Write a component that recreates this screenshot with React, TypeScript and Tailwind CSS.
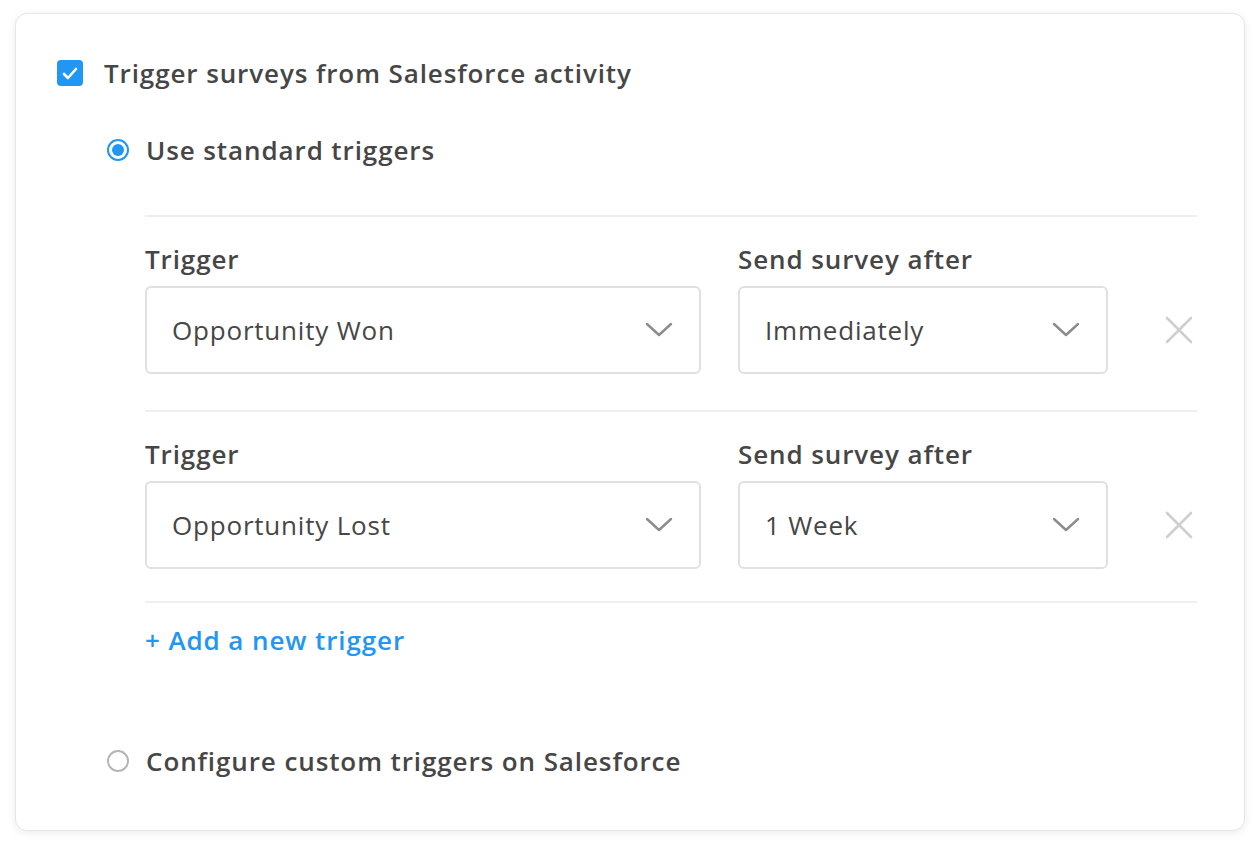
import React, { useState } from 'react';

interface TriggerRow {
  trigger: string;
  delay: string;
}

const Chevron = () => (
  <svg width="28" height="16" viewBox="0 0 28 16" fill="none">
    <path d="M2 2 L14 13 L26 2" stroke="#8c8c8c" strokeWidth="2.4" strokeLinecap="round" strokeLinejoin="round" />
  </svg>
);

const CloseIcon = () => (
  <svg width="28" height="28" viewBox="0 0 28 28" fill="none">
    <path d="M2 2 L26 26 M26 2 L2 26" stroke="#cfcfcf" strokeWidth="2.6" strokeLinecap="round" />
  </svg>
);

const SelectBox = ({ value, width }: { value: string; width: string }) => (
  <div className={`${width} h-[88px] flex items-center justify-between pl-[25px] pr-[26px] border-2 border-[#e0e0e0] rounded-[6px] bg-white`}>
    <span className="text-[26px] text-[#464646] tracking-[0.8px]">{value}</span>
    <Chevron />
  </div>
);

const App = () => {
  const [rows] = useState<TriggerRow[]>([
    { trigger: 'Opportunity Won', delay: 'Immediately' },
    { trigger: 'Opportunity Lost', delay: '1 Week' },
  ]);

  return (
    <div className="min-h-screen bg-white pt-[13px] pl-[15px]" style={{ fontFamily: '"Open Sans", Lato, sans-serif' }}>
      <div className="w-[1230px] border border-[#e6e6e6] rounded-[12px] bg-white shadow-[0_2px_8px_rgba(0,0,0,0.08)] pt-[39px] pb-[49px] pl-[41px] pr-[47px]">
        {/* master checkbox */}
        <div className="h-[40px] flex items-center">
          <div className="w-[26px] h-[26px] rounded-[4px] bg-[#2196f3] flex items-center justify-center">
            <svg width="16" height="13" viewBox="0 0 16 13" fill="none">
              <path d="M2 7 L6 11 L14 2" stroke="white" strokeWidth="2.6" strokeLinecap="round" strokeLinejoin="round" />
            </svg>
          </div>
          <span className="ml-[21px] text-[26px] font-semibold text-[#464646] tracking-[0.9px]">Trigger surveys from Salesforce activity</span>
        </div>

        <div className="pl-[50px]">
          <div className="mt-[37px] h-[40px] flex items-center">
            <div className="w-[22px] h-[22px] rounded-full border-2 border-[#2196f3] flex items-center justify-center">
              <div className="w-[12px] h-[12px] rounded-full bg-[#2196f3]" />
            </div>
            <span className="ml-[17px] text-[26px] font-semibold text-[#464646] tracking-[0.9px]">Use standard triggers</span>
          </div>

          <div className="pl-[38px]">
            <div className="mt-[45px] border-t-2 border-[#efefef]" />
            {rows.map((row, i) => (
              <div key={i}>
                <div className="mt-[27px] flex items-center text-[26px] font-semibold text-[#464646] tracking-[0.9px]">
                  <div className="w-[556px] h-[30px] flex items-center">Trigger</div>
                  <div className="ml-[37px] h-[30px] flex items-center">Send survey after</div>
                </div>
                <div className="mt-[12px] flex items-center">
                  <SelectBox value={row.trigger} width="w-[556px]" />
                  <div className="ml-[37px]">
                    <SelectBox value={row.delay} width="w-[370px]" />
                  </div>
                  <div className="ml-[57px]">
                    <CloseIcon />
                  </div>
                </div>
                <div className={`${i === 0 ? 'mt-[36px]' : 'mt-[32px]'} border-t-2 border-[#efefef]`} />
              </div>
            ))}
            <div className="mt-[22px] h-[30px] flex items-center text-[26px] font-semibold text-[#2196f3] tracking-[0.9px]">
              + Add a new trigger
            </div>
          </div>

          <div className="mt-[86px] h-[40px] flex items-center">
            <div className="w-[22px] h-[22px] rounded-full border-2 border-[#b5b5b5]" />
            <span className="ml-[17px] text-[26px] font-semibold text-[#464646] tracking-[0.9px]">Configure custom triggers on Salesforce</span>
          </div>
        </div>
      </div>
    </div>
  );
};

export default App;
